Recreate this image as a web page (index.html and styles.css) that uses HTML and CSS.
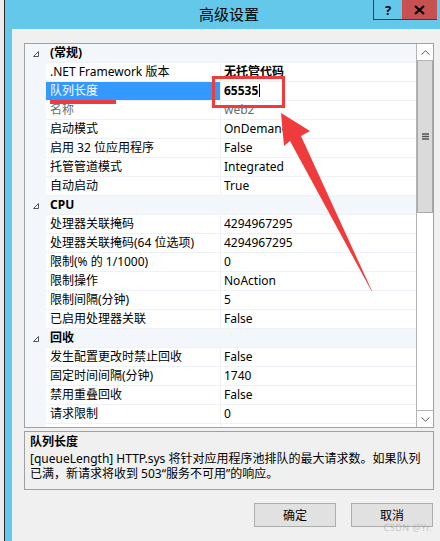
FILE: index.html
```html
<!DOCTYPE html>
<html lang="zh-CN">
<head>
  <meta charset="UTF-8">
  <title>高级设置</title>
  <link rel="stylesheet" href="styles.css">
</head>
<body>
  <div class="screen">
    <div class="behind"></div>

    <div class="dialog">
      <!-- Title bar -->
      <div class="titlebar">
        <div class="title">高级设置</div>
        <div class="tb-btn help">?</div>
        <div class="tb-btn close">
          <svg width="11" height="10" viewBox="0 0 11 10">
            <path d="M1 1 L10 9 M10 1 L1 9" stroke="#000" stroke-width="2.2" fill="none"/>
          </svg>
        </div>
      </div>

      <div class="client">
        <!-- Property grid -->
        <div class="grid">
          <div class="rows">
            <div class="row cat">
              <span class="gut"><svg class="tri" width="6" height="6" viewBox="0 0 6 6"><path d="M5.5 0.5 L5.5 5.5 L0.5 5.5 Z" fill="#fff" stroke="#555"/></svg></span>
              <span class="name">(常规)</span><span class="val"></span>
            </div>
            <div class="row"><span class="gut"></span><span class="name">.NET Framework 版本</span><span class="val bold">无托管代码</span></div>
            <div class="row selected"><span class="gut"></span><span class="name">队列长度</span><span class="val bold">65535<i class="caret"></i></span></div>
            <div class="row dim"><span class="gut"></span><span class="name">名称</span><span class="val">web2</span></div>
            <div class="row"><span class="gut"></span><span class="name">启动模式</span><span class="val">OnDemand</span></div>
            <div class="row"><span class="gut"></span><span class="name">启用 32 位应用程序</span><span class="val">False</span></div>
            <div class="row"><span class="gut"></span><span class="name">托管管道模式</span><span class="val">Integrated</span></div>
            <div class="row"><span class="gut"></span><span class="name">自动启动</span><span class="val">True</span></div>

            <div class="row cat">
              <span class="gut"><svg class="tri" width="6" height="6" viewBox="0 0 6 6"><path d="M5.5 0.5 L5.5 5.5 L0.5 5.5 Z" fill="#fff" stroke="#555"/></svg></span>
              <span class="name">CPU</span><span class="val"></span>
            </div>
            <div class="row"><span class="gut"></span><span class="name">处理器关联掩码</span><span class="val">4294967295</span></div>
            <div class="row"><span class="gut"></span><span class="name">处理器关联掩码(64 位选项)</span><span class="val">4294967295</span></div>
            <div class="row"><span class="gut"></span><span class="name">限制(% 的 1/1000)</span><span class="val">0</span></div>
            <div class="row"><span class="gut"></span><span class="name">限制操作</span><span class="val">NoAction</span></div>
            <div class="row"><span class="gut"></span><span class="name">限制间隔(分钟)</span><span class="val">5</span></div>
            <div class="row"><span class="gut"></span><span class="name">已启用处理器关联</span><span class="val">False</span></div>

            <div class="row cat">
              <span class="gut"><svg class="tri" width="6" height="6" viewBox="0 0 6 6"><path d="M5.5 0.5 L5.5 5.5 L0.5 5.5 Z" fill="#fff" stroke="#555"/></svg></span>
              <span class="name">回收</span><span class="val"></span>
            </div>
            <div class="row"><span class="gut"></span><span class="name">发生配置更改时禁止回收</span><span class="val">False</span></div>
            <div class="row"><span class="gut"></span><span class="name">固定时间间隔(分钟)</span><span class="val">1740</span></div>
            <div class="row"><span class="gut"></span><span class="name">禁用重叠回收</span><span class="val">False</span></div>
            <div class="row"><span class="gut"></span><span class="name">请求限制</span><span class="val">0</span></div>
            <div class="row"><span class="gut"></span><span class="name"></span><span class="val"></span></div>
          </div>

          <div class="scrollbar">
            <div class="sb-btn">
              <svg width="9" height="5" viewBox="0 0 9 5"><path d="M0.5 4.5 L4.5 0.8 L8.5 4.5" stroke="#555" fill="none"/></svg>
            </div>
            <div class="sb-thumb">
              <svg width="7" height="7" viewBox="0 0 7 7"><path d="M0 1 H7 M0 3.5 H7 M0 6 H7" stroke="#555" stroke-width="1.4"/></svg>
            </div>
            <div class="sb-track"></div>
            <div class="sb-btn down">
              <svg width="9" height="5" viewBox="0 0 9 5"><path d="M0.5 0.5 L4.5 4.2 L8.5 0.5" stroke="#555" fill="none"/></svg>
            </div>
          </div>
        </div>

        <!-- Help text for the selected property -->
        <div class="desc">
          <div class="desc-title">队列长度</div>
          <div class="desc-text">[queueLength] HTTP.sys 将针对应用程序池排队的最大请求数。如果队列<br>已满，新请求将收到 503“服务不可用”的响应。</div>
        </div>

        <div class="buttons">
          <button class="btn">确定</button>
          <button class="btn">取消</button>
        </div>
      </div>
    </div>
  </div>

  <!-- red pen marks -->
  <svg class="marks" width="440" height="541" viewBox="0 0 440 541">
    <rect x="50" y="100" width="66" height="4" fill="#ef3b3b"/>
    <rect x="213.5" y="77.5" width="70" height="29" fill="none" stroke="#ef3b3b" stroke-width="3"/>
    <polygon fill="#ef3b3b" points="281,113 310,131 301,136 372,291 371.5,291 290,141 284,146"/>
  </svg>

  <div class="watermark">CSDN @Yr.</div>
</body>
</html>
```

FILE: styles.css
```css
* {
  box-sizing: border-box;
}

html, body {
  margin: 0;
  padding: 0;
  width: 440px;
  height: 541px;
  overflow: hidden;
  font-family: "Noto Sans", "Noto Sans CJK SC", sans-serif;
  font-size: 12px;
  color: #000;
}

body {
  position: relative;
}

.screen {
  display: flex;
  height: 100%;
}

.behind {
  width: 5px;
  background: #ececec;
  border-right: 1px solid #2a2a2a;
}

.dialog {
  flex: 1;
  display: flex;
  flex-direction: column;
  background: #63c8e9;
}

/* title bar */
.titlebar {
  height: 29px;
  display: flex;
  align-items: flex-start;
  padding-right: 3px;
}

.title {
  flex: 1;
  line-height: 29px;
  font-size: 15px;
  text-align: center;
  padding-left: 80px;
}

.tb-btn {
  height: 20px;
  display: flex;
  align-items: center;
  justify-content: center;
}

.help {
  width: 29px;
  border-left: 1px solid #2f3b40;
  border-bottom: 1px solid #2f3b40;
  font-weight: bold;
  font-size: 13px;
}

.close {
  width: 35px;
  background: #c75050;
  border-bottom: 1px solid #6b2a2a;
}

.client {
  flex: 1;
  margin-left: 7px;
  background: #f0f0f0;
  padding: 14px 6px 0 12px;
  display: flex;
  flex-direction: column;
}

/* property grid */
.grid {
  height: 385px;
  border: 1px solid #a0a0a0;
  background: #fff;
  display: flex;
  overflow: hidden;
}

.rows {
  flex: 1;
  overflow: hidden;
}

.row {
  display: flex;
  height: 19px;
  line-height: 18px;
}

.gut {
  width: 21px;
  flex-shrink: 0;
  background: #f3f6fb;
  display: flex;
  align-items: center;
}

.tri {
  margin-left: 8px;
  margin-top: 1px;
}

.name {
  width: 175px;
  flex-shrink: 0;
  padding-left: 4px;
  border-right: 1px solid #eef1f7;
  border-bottom: 1px solid #eef1f7;
  white-space: nowrap;
}

.val {
  flex: 1;
  padding-left: 3px;
  border-bottom: 1px solid #eef1f7;
  white-space: nowrap;
  overflow: hidden;
}

.row.cat .name,
.row.cat .val {
  background: #f3f6fb;
  border-right-color: #f3f6fb;
  font-weight: bold;
}

.row.selected .name {
  background: #3399ff;
  color: #fff;
}

.row.dim {
  color: #6d6d6d;
}

.bold {
  font-weight: bold;
}

.caret {
  display: inline-block;
  width: 1px;
  height: 13px;
  background: #000;
  vertical-align: -2px;
  margin-left: 1px;
}

/* scrollbar */
.scrollbar {
  width: 17px;
  flex-shrink: 0;
  display: flex;
  flex-direction: column;
  border-left: 1px solid #b4b4b4;
}

.sb-btn {
  height: 17px;
  background: #fff;
  border-bottom: 1px solid #b4b4b4;
  display: flex;
  align-items: center;
  justify-content: center;
}

.sb-btn.down {
  border-bottom: none;
  border-top: 1px solid #b4b4b4;
}

.sb-thumb {
  height: 152px;
  background: #dadada;
  border: 1px solid #a8a8a8;
  border-top: none;
  display: flex;
  align-items: center;
  justify-content: center;
}

.sb-track {
  flex: 1;
  background: #fff;
}

/* description panel */
.desc {
  margin-top: 3px;
  height: 59px;
  border: 1px solid #a0a0a0;
  padding: 1px 5px 0;
}

.desc-title {
  font-weight: bold;
  line-height: 18px;
}

.desc-text {
  line-height: 15px;
  white-space: nowrap;
}

.buttons {
  margin-top: 13px;
  display: flex;
  justify-content: flex-end;
  gap: 15px;
  padding-right: 1px;
}

.btn {
  width: 82px;
  height: 24px;
  background: #e1e1e1;
  border: 1px solid #adadad;
  font-family: inherit;
  font-size: 12px;
  padding: 0;
  color: #000;
}

/* overlays */
.marks {
  position: absolute;
  left: 0;
  top: 0;
  pointer-events: none;
}

.watermark {
  position: absolute;
  right: 8px;
  bottom: 7px;
  font-size: 9px;
  color: rgba(140, 140, 140, 0.45);
  letter-spacing: 0.5px;
}
```
